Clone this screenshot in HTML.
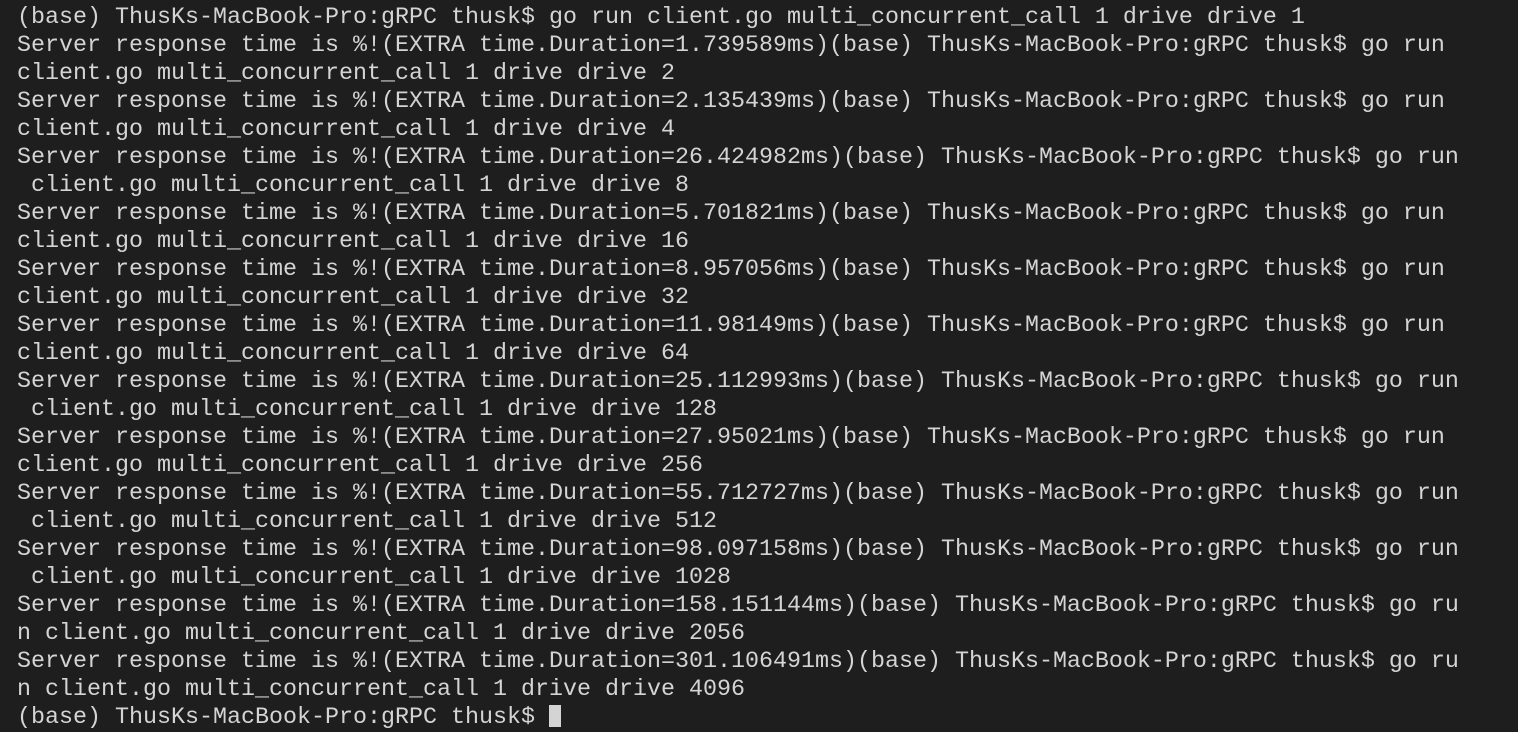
<!DOCTYPE html>
<html><head><meta charset="utf-8"><style>
html,body{margin:0;padding:0;background:#1e1e1e;width:1518px;height:706px;overflow:hidden}
pre{margin:0;position:absolute;left:17px;top:4px;font-family:"Liberation Mono",monospace;font-size:23.33px;line-height:28px;color:#d4d4d4;white-space:pre}
.c{display:inline-block;width:12px;height:22px;background:#d4d4d4;vertical-align:-4px}
</style></head><body><pre>(base) ThusKs-MacBook-Pro:gRPC thusk$ go run client.go multi_concurrent_call 1 drive drive 1
Server response time is %!(EXTRA time.Duration=1.739589ms)(base) ThusKs-MacBook-Pro:gRPC thusk$ go run
client.go multi_concurrent_call 1 drive drive 2
Server response time is %!(EXTRA time.Duration=2.135439ms)(base) ThusKs-MacBook-Pro:gRPC thusk$ go run
client.go multi_concurrent_call 1 drive drive 4
Server response time is %!(EXTRA time.Duration=26.424982ms)(base) ThusKs-MacBook-Pro:gRPC thusk$ go run
 client.go multi_concurrent_call 1 drive drive 8
Server response time is %!(EXTRA time.Duration=5.701821ms)(base) ThusKs-MacBook-Pro:gRPC thusk$ go run
client.go multi_concurrent_call 1 drive drive 16
Server response time is %!(EXTRA time.Duration=8.957056ms)(base) ThusKs-MacBook-Pro:gRPC thusk$ go run
client.go multi_concurrent_call 1 drive drive 32
Server response time is %!(EXTRA time.Duration=11.98149ms)(base) ThusKs-MacBook-Pro:gRPC thusk$ go run
client.go multi_concurrent_call 1 drive drive 64
Server response time is %!(EXTRA time.Duration=25.112993ms)(base) ThusKs-MacBook-Pro:gRPC thusk$ go run
 client.go multi_concurrent_call 1 drive drive 128
Server response time is %!(EXTRA time.Duration=27.95021ms)(base) ThusKs-MacBook-Pro:gRPC thusk$ go run
client.go multi_concurrent_call 1 drive drive 256
Server response time is %!(EXTRA time.Duration=55.712727ms)(base) ThusKs-MacBook-Pro:gRPC thusk$ go run
 client.go multi_concurrent_call 1 drive drive 512
Server response time is %!(EXTRA time.Duration=98.097158ms)(base) ThusKs-MacBook-Pro:gRPC thusk$ go run
 client.go multi_concurrent_call 1 drive drive 1028
Server response time is %!(EXTRA time.Duration=158.151144ms)(base) ThusKs-MacBook-Pro:gRPC thusk$ go ru
n client.go multi_concurrent_call 1 drive drive 2056
Server response time is %!(EXTRA time.Duration=301.106491ms)(base) ThusKs-MacBook-Pro:gRPC thusk$ go ru
n client.go multi_concurrent_call 1 drive drive 4096
(base) ThusKs-MacBook-Pro:gRPC thusk$ <span class="c"></span></pre></body></html>
